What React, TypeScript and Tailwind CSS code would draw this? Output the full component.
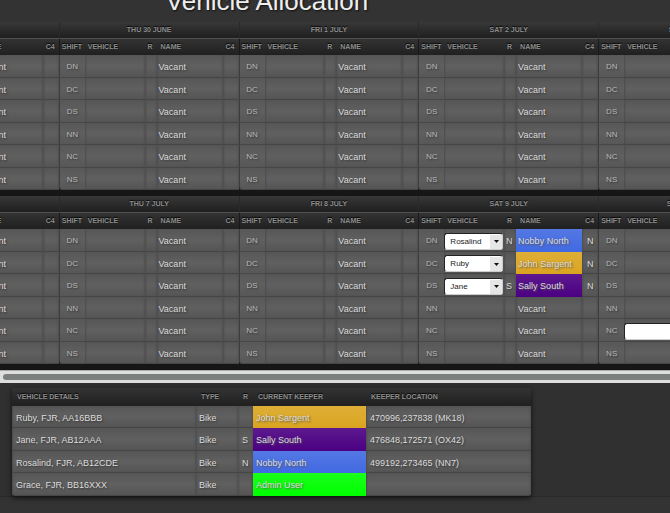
import { Fragment } from "react";

type Slot = { vehicle?: string; region?: string; name: string; c4?: string; color?: string };

const SHIFTS = ["DN", "DC", "DS", "NN", "NC", "NS"];
const VEHICLES = ["", "Rosalind", "Ruby", "Jane", "Grace"];

const WEEKS: { days: string[]; slots: Record<string, Slot> }[] = [
  { days: ["WED 29 JUNE", "THU 30 JUNE", "FRI 1 JULY", "SAT 2 JULY", "SUN 3 JULY"], slots: {} },
  {
    days: ["WED 6 JULY", "THU 7 JULY", "FRI 8 JULY", "SAT 9 JULY", "SUN 10 JULY"],
    slots: {
      "3-DN": { vehicle: "Rosalind", region: "N", name: "Nobby North", c4: "N", color: "bg-[#4169e1]" },
      "3-DC": { vehicle: "Ruby", name: "John Sargent", c4: "N", color: "bg-[#daa520]" },
      "3-DS": { vehicle: "Jane", region: "S", name: "Sally South", c4: "N", color: "bg-[#4b0082]" },
      "4-NC": { vehicle: "", name: "Vacant" },
    },
  },
];

const KEEPERS = [
  { details: "Ruby, FJR, AA16BBB", region: "", keeper: "John Sargent", color: "bg-[#daa520]", location: "470996,237838 (MK18)" },
  { details: "Jane, FJR, AB12AAA", region: "S", keeper: "Sally South", color: "bg-[#4b0082]", location: "476848,172571 (OX42)" },
  { details: "Rosalind, FJR, AB12CDE", region: "N", keeper: "Nobby North", color: "bg-[#4169e1]", location: "499192,273465 (NN7)" },
  { details: "Grace, FJR, BB16XXX", region: "", keeper: "Admin User", color: "bg-[#00ff00]", location: "" },
];

const TH = "p-0 pl-[3px] text-left text-[7px] leading-[14px] font-bold text-[#8e8e8e] [text-shadow:0_-1px_1px_#000] bg-linear-to-b from-[#333] to-[#202020]";
const TD =
  "p-0 pt-[2px] pl-[2px] text-[9px] leading-[18px] text-[#dcdcdc] [text-shadow:1px_1px_2px_#333] border-b border-[#464646] bg-linear-to-b from-[#565656] via-[#606060] to-[#555] shadow-[inset_2px_0_2px_-1px_#4d4d4d,inset_-2px_0_2px_-1px_#505050]";
const COLORED =
  "p-0 pt-px pl-[2px] text-[9px] leading-[18px] text-[#dcdcdc] [text-shadow:1px_1px_2px_#555] bg-linear-to-b from-white/10 to-transparent";

function VehicleSelect({ value, label }: { value: string; label: string }) {
  return (
    <div className="relative h-[17px] w-[59px]">
      <select
        aria-label={label}
        defaultValue={value}
        className="block h-[17px] w-full appearance-none rounded-[3px] border border-t-[#222] border-l-[#222] border-r-[#ccc] border-b-[#ccc] bg-white pt-px pl-[5px] text-[8px] leading-[14px] text-[#222] [text-shadow:none]"
      >
        {VEHICLES.map((v) => (
          <option key={v}>{v}</option>
        ))}
      </select>
      <span className="pointer-events-none absolute top-[2px] right-px flex h-[14px] w-[12px] items-center justify-center bg-[#e6e6e6]">
        <svg width="5" height="3" viewBox="0 0 5 3">
          <path d="M0 0h5L2.500 3z" fill="#111" />
        </svg>
      </span>
    </div>
  );
}

function WeekTable({ days, slots }: { days: string[]; slots: Record<string, Slot> }) {
  return (
    <table className="-ml-[121px] w-[899px] table-fixed border-separate border-spacing-0">
      <colgroup>
        {days.map((d) => (
          <Fragment key={d}>
            <col className="w-[26px]" />
            <col />
            <col className="w-[12px]" />
            <col className="w-[66px]" />
            <col className="w-[16px]" />
          </Fragment>
        ))}
      </colgroup>
      <thead>
        <tr className="h-[17px]">
          {days.map((d) => (
            <th
              key={d}
              colSpan={5}
              className="border-b border-[#505050] border-l border-l-[#292929] bg-linear-to-b from-[#383838] to-[#1f1f1f] p-0 text-center text-[7px] leading-[14px] font-bold text-[#8e8e8e] [text-shadow:0_-1px_1px_#000]"
            >
              {d}
            </th>
          ))}
        </tr>
        <tr className="h-[16px]">
          {days.map((d) => (
            <Fragment key={d}>
              <th className={`${TH} shadow-[inset_1px_0_0_#181818]`}>SHIFT</th>
              <th className={TH}>VEHICLE</th>
              <th className={TH}>R</th>
              <th className={TH}>
                <span className="pl-px">NAME</span>
              </th>
              <th className={TH}>C4</th>
            </Fragment>
          ))}
        </tr>
      </thead>
      <tbody>
        {SHIFTS.map((shift) => (
          <tr key={shift} className="group odd:h-[23px] even:h-[22px]">
            {days.map((d, i) => {
              const slot = slots[`${i}-${shift}`];
              return (
                <Fragment key={d}>
                  <td className="border-b border-l border-[#484848] border-l-[#3c3c3c] bg-linear-to-b from-[#585858] via-[#5f5f5f] to-[#575757] p-0 pt-[2px] text-center text-[8px] leading-[18px] text-[#b9b9b9] [text-shadow:1px_1px_2px_#333] group-last:rounded-bl-[3px]">
                    {shift}
                  </td>
                  <td className={TD}>
                    {slot?.vehicle !== undefined && (
                      <div className="-ml-[2px]">
                        <VehicleSelect value={slot.vehicle} label={`Vehicle ${d} ${shift}`} />
                      </div>
                    )}
                  </td>
                  <td className={TD}>{slot?.region}</td>
                  <td className={slot?.color ? `${COLORED} ${slot.color}` : TD}>{slot?.name ?? "Vacant"}</td>
                  <td className={`${TD} pl-[5px]`}>{slot?.c4}</td>
                </Fragment>
              );
            })}
          </tr>
        ))}
      </tbody>
    </table>
  );
}

export default function App() {
  return (
    <div className="min-h-screen w-full overflow-hidden bg-[#333] font-['Liberation_Sans',Arial,sans-serif]">
      <h1 className="-mt-[12px] h-[34px] w-[534px] text-center text-[26px] leading-[26px] text-[#eee] [text-shadow:1px_1px_2px_#111]">
        Vehicle Allocation
      </h1>
      <div className="overflow-hidden bg-[#161616] pb-[6px]">
        <div className="flex flex-col gap-[6px]">
          {WEEKS.map((w) => (
            <WeekTable key={w.days[0]} {...w} />
          ))}
        </div>
      </div>
      <div className="h-[13px] border-t border-[#aaa] bg-[#dedede] pt-[3px] pl-[3px]">
        <div className="h-[6px] rounded-l-full bg-[#7b7f7e]" />
      </div>
      <section className="border-b border-[#292929] bg-[#303030] pt-[5px] pl-[12px]">
        <table className="w-[519px] table-fixed border-separate border-spacing-0 rounded-[3px] shadow-[0_2px_5px_#111]">
          <colgroup>
            <col className="w-[184px]" />
            <col className="w-[42px]" />
            <col className="w-[15px]" />
            <col className="w-[113px]" />
            <col />
          </colgroup>
          <thead>
            <tr className="h-[18px]">
              <th className={`${TH} pl-[5px]`}>VEHICLE DETAILS</th>
              <th className={`${TH} pl-[5px]`}>TYPE</th>
              <th className={`${TH} pl-[5px]`}>R</th>
              <th className={`${TH} pl-[5px]`}>CURRENT KEEPER</th>
              <th className={`${TH} pl-[5px]`}>KEEPER LOCATION</th>
            </tr>
          </thead>
          <tbody>
            {KEEPERS.map((k) => (
              <tr key={k.details} className="group odd:h-[22px] even:h-[23px]">
                <td className={`${TD} pl-[4px] group-last:rounded-bl-[3px]`}>{k.details}</td>
                <td className={`${TD} pl-[3px]`}>Bike</td>
                <td className={`${TD} pl-[4px]`}>{k.region}</td>
                <td className={`${COLORED} pl-[3px] ${k.color}`}>{k.keeper}</td>
                <td className={`${TD} pl-[4px] group-last:rounded-br-[3px]`}>{k.location}</td>
              </tr>
            ))}
          </tbody>
        </table>
      </section>
    </div>
  );
}
